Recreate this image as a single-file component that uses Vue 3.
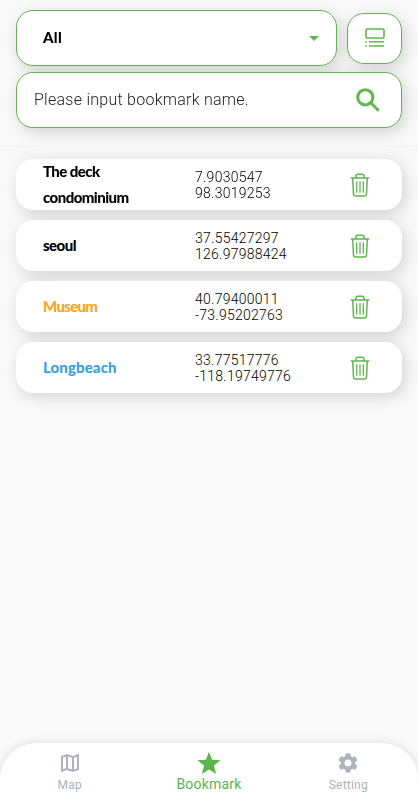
<template>
  <div class="page">
    <header class="toolbar">
      <div class="toolbar-row">
        <button type="button" class="field select">
          <span class="select-label">{{ category }}</span>
          <svg class="caret" viewBox="0 0 10 5"><path d="M0 0h10L5 5z" /></svg>
        </button>
        <button type="button" class="field view-button" aria-label="Change view">
          <svg class="view-icon" viewBox="0 0 20 20">
            <rect x="1" y="1" width="18" height="9" rx="1.2" />
            <path d="M0.3 13.8h1.6M4 13.8h15.2M0.3 18h1.6M4 18h15.2" />
          </svg>
        </button>
      </div>
      <div class="field search">
        <input v-model="keyword" type="text" class="search-input" placeholder="Please input bookmark name." />
        <svg class="search-icon" viewBox="0 0 24 24">
          <circle cx="9.3" cy="9.3" r="7.6" />
          <path d="M15 15l7.7 7.7" />
        </svg>
      </div>
    </header>

    <main class="list">
      <div v-for="item in filtered" :key="item.name" class="card">
        <div class="name" :class="item.color">{{ item.name }}</div>
        <div class="coords">
          <div>{{ item.lat }}</div>
          <div>{{ item.lng }}</div>
        </div>
        <button type="button" class="delete" aria-label="Delete" @click="remove(item)">
          <svg class="trash-icon" viewBox="0 0 20 24">
            <path d="M0.7 5h18.6M6 5V3Q6 1.2 7.8 1.2h4.4Q14 1.2 14 3v2M2.7 5l.8 16q.1 1.9 2 1.9h9q1.9 0 2-1.9l.8-16" />
            <path class="thin" d="M6.7 8.3v11.4M10 8.3v11.4M13.3 8.3v11.4" />
          </svg>
        </button>
      </div>
    </main>

    <nav class="tabs">
      <a class="tab">
        <svg class="tab-icon" viewBox="0 0 24 24">
          <path d="M20.5 3l-.16.03L15 5.1 9 3 3.36 4.9c-.21.07-.36.25-.36.48V20.5c0 .28.22.5.5.5l.16-.03L9 18.9l6 2.1 5.64-1.9c.21-.07.36-.25.36-.48V3.5c0-.28-.22-.5-.5-.5zM10 5.47l4 1.4v11.66l-4-1.4V5.47zm-5 .99l3-1.01v11.7l-3 1.16V6.46zm14 11.08l-3 1.01V6.86l3-1.16v11.84z" />
        </svg>
        <span>Map</span>
      </a>
      <a class="tab active">
        <svg class="tab-icon" viewBox="0 0 24 24">
          <path d="M12 .8l3.1 7.9 8.4.5-6.5 5.4 2.1 8.4-7.1-4.6L4.9 23 7 14.6.5 9.2l8.4-.5z" />
        </svg>
        <span>Bookmark</span>
      </a>
      <a class="tab">
        <svg class="tab-icon" viewBox="0 0 24 24">
          <path d="M19.14 12.94c.04-.3.06-.61.06-.94 0-.32-.02-.64-.07-.94l2.03-1.58c.18-.14.23-.41.12-.61l-1.92-3.32c-.12-.22-.37-.29-.59-.22l-2.39.96c-.5-.38-1.03-.7-1.62-.94l-.36-2.54c-.04-.24-.24-.41-.48-.41h-3.84c-.24 0-.43.17-.47.41l-.36 2.54c-.59.24-1.13.57-1.62.94l-2.39-.96c-.22-.08-.47 0-.59.22L2.74 8.87c-.12.21-.08.47.12.61l2.03 1.58c-.05.3-.09.63-.09.94s.02.64.07.94l-2.03 1.58c-.18.14-.23.41-.12.61l1.92 3.32c.12.22.37.29.59.22l2.39-.96c.5.38 1.03.7 1.62.94l.36 2.54c.05.24.24.41.48.41h3.84c.24 0 .44-.17.47-.41l.36-2.54c.59-.24 1.13-.56 1.62-.94l2.39.96c.22.08.47 0 .59-.22l1.92-3.32c.12-.22.07-.47-.12-.61l-2.01-1.58zM12 15.6c-1.98 0-3.6-1.62-3.6-3.6s1.62-3.6 3.6-3.6 3.6 1.62 3.6 3.6-1.62 3.6-3.6 3.6z" />
        </svg>
        <span>Setting</span>
      </a>
    </nav>
  </div>
</template>

<script setup>
import { ref, computed } from 'vue'

const category = ref('All')
const keyword = ref('')
const bookmarks = ref([
  { name: 'The deck condominium', lat: '7.9030547', lng: '98.3019253', color: 'black' },
  { name: 'seoul', lat: '37.55427297', lng: '126.97988424', color: 'black' },
  { name: 'Museum', lat: '40.79400011', lng: '-73.95202763', color: 'orange' },
  { name: 'Longbeach', lat: '33.77517776', lng: '-118.19749776', color: 'blue' },
])

const filtered = computed(() =>
  bookmarks.value.filter((b) => b.name.toLowerCase().includes(keyword.value.toLowerCase()))
)

function remove(item) {
  bookmarks.value = bookmarks.value.filter((b) => b !== item)
}
</script>

<style>
body {
  background: #fafafa;
}
</style>

<style scoped>
.page {
  display: flex;
  flex-direction: column;
  height: 100vh;
  overflow: hidden;
  background: #fafafa;
  font-family: Roboto, sans-serif;
}

.page * {
  box-sizing: border-box;
}

button {
  padding: 0;
  border: 0;
  background: none;
  font: inherit;
}

.toolbar {
  display: flex;
  flex-direction: column;
  gap: 6px;
  height: 147px;
  padding: 10px 16px 0;
  border-bottom: 1px solid #f3f3f3;
  flex-shrink: 0;
}

/* one shadow for the whole group, so it never falls on a neighbour */
.toolbar,
.list {
  filter: drop-shadow(3px 4px 8px rgba(0, 0, 0, 0.16));
}

.toolbar-row {
  display: flex;
  align-items: center;
  gap: 10px;
}

.field {
  display: flex;
  align-items: center;
  height: 56px;
  border: 1px solid #66b055;
  border-radius: 17px;
  background: #fff;
}

.select {
  flex: 1;
  justify-content: space-between;
  padding: 0 17px 0 26px;
}

.select-label {
  padding-bottom: 2px;
  font: 900 15px Lato, sans-serif;
  letter-spacing: 0.3px;
  color: #000;
}

.caret {
  width: 10px;
  height: 5px;
  fill: #5fb74e;
}

.view-button {
  justify-content: center;
  width: 55px;
  height: 51px;
}

.view-icon {
  width: 20px;
  height: 20px;
  fill: none;
  stroke: #5fb74e;
  stroke-width: 1.6;
}

.search {
  padding: 0 21px 0 17px;
}

.search-input {
  flex: 1;
  min-width: 0;
  padding: 0 0 2px;
  border: 0;
  outline: 0;
  background: none;
  font: 300 16px Roboto, sans-serif;
  letter-spacing: 0.26px;
}

.search-input::placeholder {
  color: #222;
  opacity: 1;
}

.search-icon {
  width: 24px;
  height: 24px;
  fill: none;
  stroke: #5fb74e;
  stroke-width: 3;
}

.list {
  display: flex;
  flex: 1;
  flex-direction: column;
  gap: 10px;
  padding: 12px 16px;
}

.card {
  display: flex;
  align-items: center;
  height: 51px;
  padding: 0 32px 0 27px;
  border-radius: 17px;
  background: #fff;
}

.name {
  width: 152px;
  padding: 0 50px 1px 0;
  font: 900 15px/26px Lato, sans-serif;
  letter-spacing: -0.55px;
}

.name.black {
  color: #000;
}

.name.orange {
  letter-spacing: -0.7px;
  color: #f5a623;
}

.name.blue {
  letter-spacing: 0.1px;
  color: #3b9fe3;
}

.coords {
  flex: 1;
  font-size: 14px;
  font-weight: 300;
  line-height: 16px;
  letter-spacing: 0.25px;
  color: #000;
}

.delete {
  display: flex;
}

.trash-icon {
  width: 20px;
  height: 24px;
  fill: none;
  stroke: #5fb74e;
  stroke-width: 1.5;
}

.trash-icon .thin {
  stroke-width: 1.3;
}

.tabs {
  display: flex;
  height: 57px;
  flex-shrink: 0;
  border-radius: 36px 36px 0 0;
  background: #fff;
  box-shadow: 0 0 10px rgba(60, 60, 90, 0.17);
}

.tab {
  display: flex;
  flex: 1;
  flex-direction: column;
  align-items: center;
  padding-top: 8px;
  color: #adb2be;
  font-size: 12px;
  line-height: 20px;
  letter-spacing: 0.2px;
}

.tab-icon {
  width: 24px;
  height: 24px;
  fill: currentColor;
}

.tab.active {
  color: #5cb54c;
  font-size: 14px;
  line-height: 18px;
}
</style>
